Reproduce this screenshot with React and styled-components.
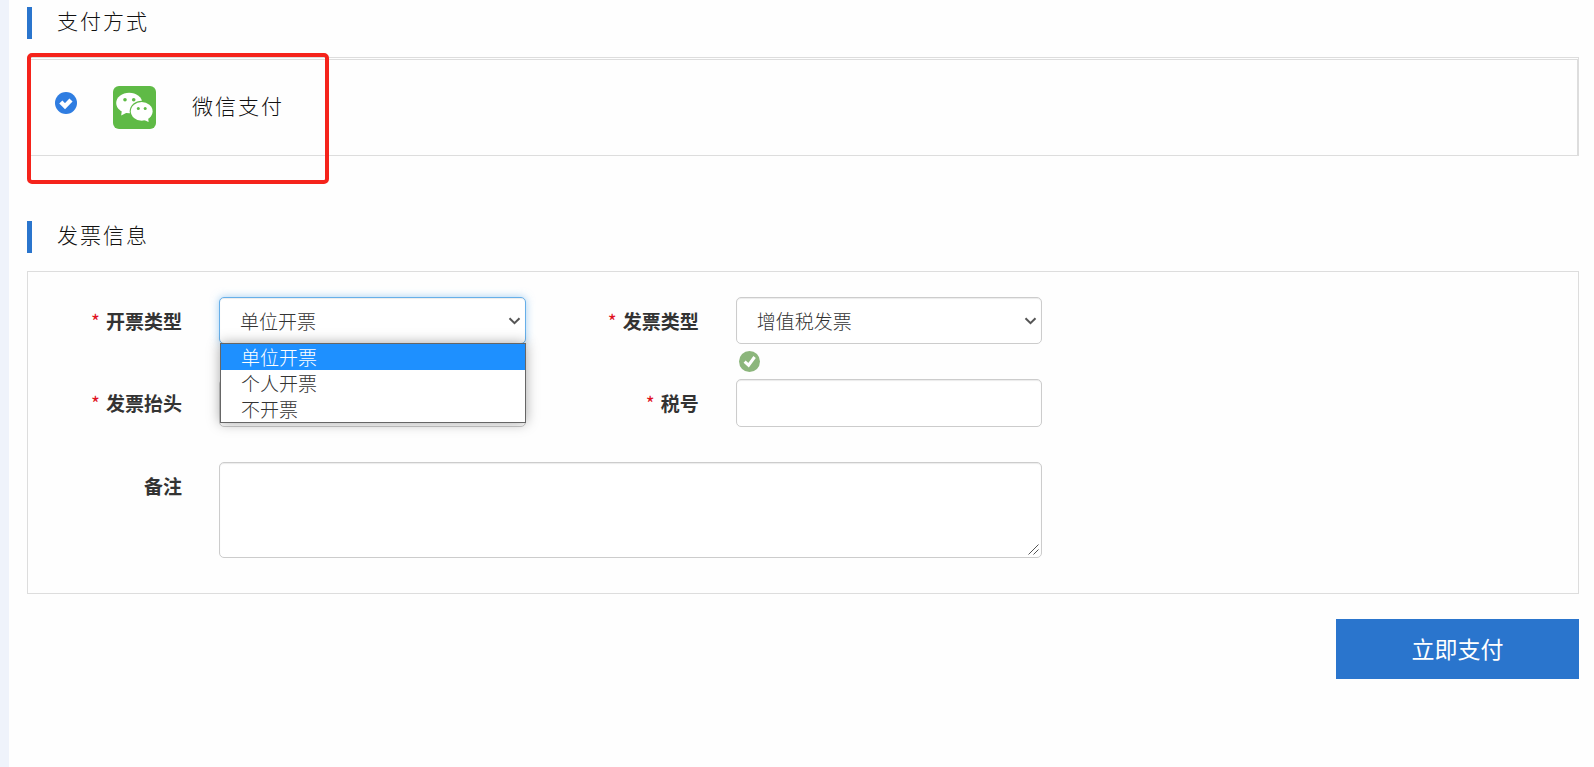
import React, { useState } from 'react';
import styled, { createGlobalStyle, css } from 'styled-components';

const GlobalStyle = createGlobalStyle`
  * {
    box-sizing: border-box;
  }

  body {
    margin: 0;
    background: #fefefe;
    color: #111;
    font-family: "Noto Sans CJK SC", "Liberation Sans", sans-serif;
    font-size: 19px;
    font-weight: 300;
  }

  input, select, textarea, button {
    font: inherit;
  }
`;

const Page = styled.main`
  min-height: 100vh;
  padding: 7px 15px 24px 18px;
  border-left: 9px solid #eff3fb;
`;

const SectionTitle = styled.h2`
  height: 32px;
  margin: 0 0 18px;
  padding-left: 25px;
  border-left: 5px solid #2a75cd;
  font-size: 21px;
  font-weight: 300;
  line-height: 26px;
  letter-spacing: 2px;
`;

const PayPanel = styled.section`
  position: relative;
  margin-bottom: 65px;
  padding-top: 1px;
  border: 1px solid #ddd;
  border-bottom: 0;
`;

const PayRow = styled.label`
  display: flex;
  align-items: flex-start;
  gap: 36px;
  height: 97px;
  padding: 26px;
  border: 1px solid #ddd;
`;

const RadioBox = styled.span`
  position: relative;
  display: flex;
  align-items: center;
  height: 34px;
`;

const Radio = styled.input`
  position: absolute;
  inset: 0;
  width: 100%;
  height: 100%;
  margin: 0;
  opacity: 0;
`;

const PayName = styled.span`
  font-size: 21px;
  line-height: 38px;
  letter-spacing: 2px;
`;

const Highlight = styled.div`
  position: absolute;
  top: -5px;
  left: -1px;
  width: 302px;
  height: 131px;
  border: 4px solid #f5231b;
  border-radius: 5px;
  pointer-events: none;
`;

const InvoicePanel = styled.section`
  display: grid;
  grid-template-columns: repeat(3, 1fr);
  margin-bottom: 25px;
  padding-top: 25px;
  border: 1px solid #ddd;
`;

const Field = styled.div`
  display: grid;
  grid-template-columns: 191px 1fr;
  grid-column: ${({ $start, $span }) => `${$start} / span ${$span || 1}`};
  padding-right: 19px;
`;

const Label = styled.label`
  padding-right: 37px;
  color: #333;
  font-weight: 700;
  line-height: 47px;
  text-align: right;
`;

const Required = styled.span`
  margin-right: 6px;
  color: #e01020;
  font-weight: 400;
`;

const Control = styled.div`
  position: relative;
`;

const Note = styled.div`
  display: flex;
  align-items: center;
  height: 35px;
  padding-left: 3px;
`;

const fieldStyle = css`
  display: block;
  width: 100%;
  height: 47px;
  padding: 0 20px;
  border: 1px solid ${({ $focus }) => ($focus ? '#66afe9' : '#ccc')};
  border-radius: 5px;
  outline: none;
  background: #fff;
  box-shadow: inset 0 1px 1px rgba(0, 0, 0, 0.08)
    ${({ $focus }) => $focus && ', 0 0 9px rgba(102, 175, 233, 0.6)'};
  color: #333;
`;

const Input = styled.input`
  ${fieldStyle}
  height: 48px;
`;

const Select = styled.select`
  ${fieldStyle}
  appearance: none;
`;

const TextArea = styled.textarea`
  ${fieldStyle}
  height: 96px;
  padding: 8px 20px;
  resize: none;
`;

const Chevron = styled.svg`
  position: absolute;
  top: 20px;
  right: 5px;
  pointer-events: none;
`;

const Grip = styled.svg`
  position: absolute;
  top: 82px;
  right: 3px;
  pointer-events: none;
`;

const OptionList = styled.ul`
  position: absolute;
  z-index: 1;
  top: 46px;
  left: 1px;
  right: 0;
  margin: 0;
  padding: 0;
  border: 1px solid #666;
  background: #fff;
  box-shadow: 0 0 12px rgba(0, 0, 0, 0.35);
  list-style: none;
`;

const Option = styled.li`
  height: 26px;
  padding-left: 20px;
  background: ${({ $active }) => ($active ? '#1e90ff' : '#fff')};
  color: ${({ $active }) => ($active ? '#fff' : '#333')};
  line-height: 25px;
`;

const Footer = styled.footer`
  display: flex;
  justify-content: flex-end;
`;

const PayButton = styled.button`
  width: 243px;
  height: 60px;
  padding: 0 0 3px;
  border: 0;
  background: #2a75cd;
  color: #fff;
  font-size: 23px;
  font-weight: 400;
`;

const CheckedIcon = () => (
  <svg width="22" height="22" viewBox="0 0 22 22" aria-hidden="true">
    <circle cx="11" cy="11" r="11" fill="#2f7de1" />
    <path d="M5.8 10 10 14.2 16 8" fill="none" stroke="#fff" strokeWidth="4.4" />
  </svg>
);

const ValidIcon = () => (
  <svg width="21" height="21" viewBox="0 0 21 21" role="img" aria-label="valid">
    <circle cx="10.5" cy="10.5" r="10.5" fill="#8cb67c" />
    <path d="M5.6 10.6 9.6 14.2 15.6 6" fill="none" stroke="#fff" strokeWidth="3" />
  </svg>
);

const WechatIcon = () => (
  <svg width="43" height="43" viewBox="0 0 43 43" aria-hidden="true">
    <rect width="43" height="43" rx="6" fill="#5fba46" />
    <g fill="#fff">
      <ellipse cx="16.2" cy="17" rx="13" ry="10.3" />
      <path d="M9 23 8.2 29.6 15 26z" />
    </g>
    <g fill="#5fba46">
      <circle cx="12" cy="13.8" r="1.8" />
      <circle cx="20.7" cy="13.8" r="1.8" />
      <ellipse cx="28.7" cy="25.3" rx="12" ry="10.6" />
    </g>
    <g fill="#fff">
      <ellipse cx="28.7" cy="25.3" rx="10.9" ry="9.4" />
      <path d="M30 33.5 35.6 36 35 31z" />
    </g>
    <g fill="#5fba46">
      <circle cx="25.3" cy="22.4" r="1.5" />
      <circle cx="32.2" cy="22.4" r="1.5" />
    </g>
  </svg>
);

const Arrow = () => (
  <Chevron width="13" height="8" viewBox="0 0 13 8" aria-hidden="true">
    <path d="M1.5 1.2 6.5 6.2 11.5 1.2" fill="none" stroke="#555" strokeWidth="2" />
  </Chevron>
);

const OPEN_TYPES = ['单位开票', '个人开票', '不开票'];

const App = () => {
  const [openType, setOpenType] = useState(OPEN_TYPES[0]);

  return (
    <>
      <GlobalStyle />
      <Page>
        <SectionTitle>支付方式</SectionTitle>
        <PayPanel>
          <PayRow>
            <RadioBox>
              <Radio type="radio" name="payment" value="wechat" defaultChecked />
              <CheckedIcon />
            </RadioBox>
            <WechatIcon />
            <PayName>微信支付</PayName>
          </PayRow>
          <Highlight />
        </PayPanel>

        <SectionTitle>发票信息</SectionTitle>
        <InvoicePanel>
          <Field $start={1}>
            <Label htmlFor="openType">
              <Required>*</Required>开票类型
            </Label>
            <Control>
              <Select
                id="openType"
                $focus
                value={openType}
                onChange={(e) => setOpenType(e.target.value)}
              >
                {OPEN_TYPES.map((type) => (
                  <option key={type}>{type}</option>
                ))}
              </Select>
              <Arrow />
              <OptionList role="listbox" aria-label="开票类型">
                {OPEN_TYPES.map((type) => (
                  <Option
                    key={type}
                    role="option"
                    aria-selected={type === openType}
                    $active={type === openType}
                    onClick={() => setOpenType(type)}
                  >
                    {type}
                  </Option>
                ))}
              </OptionList>
            </Control>
          </Field>

          <Field $start={2}>
            <Label htmlFor="invoiceType">
              <Required>*</Required>发票类型
            </Label>
            <Control>
              <Select id="invoiceType">
                <option>增值税发票</option>
              </Select>
              <Arrow />
              <Note>
                <ValidIcon />
              </Note>
            </Control>
          </Field>

          <Field $start={1}>
            <Label htmlFor="invoiceTitle">
              <Required>*</Required>发票抬头
            </Label>
            <Control>
              <Input id="invoiceTitle" type="text" />
              <Note />
            </Control>
          </Field>

          <Field $start={2}>
            <Label htmlFor="taxNo">
              <Required>*</Required>税号
            </Label>
            <Control>
              <Input id="taxNo" type="text" />
              <Note />
            </Control>
          </Field>

          <Field $start={1} $span={2}>
            <Label htmlFor="remark">备注</Label>
            <Control>
              <TextArea id="remark" />
              <Grip width="11" height="11" viewBox="0 0 11 11" aria-hidden="true">
                <path d="M0.5 10.5 10.5 0.5M5.5 10.5 10.5 5.5" fill="none" stroke="#555" />
              </Grip>
              <Note />
            </Control>
          </Field>
        </InvoicePanel>

        <Footer>
          <PayButton type="button">立即支付</PayButton>
        </Footer>
      </Page>
    </>
  );
};

export default App;
